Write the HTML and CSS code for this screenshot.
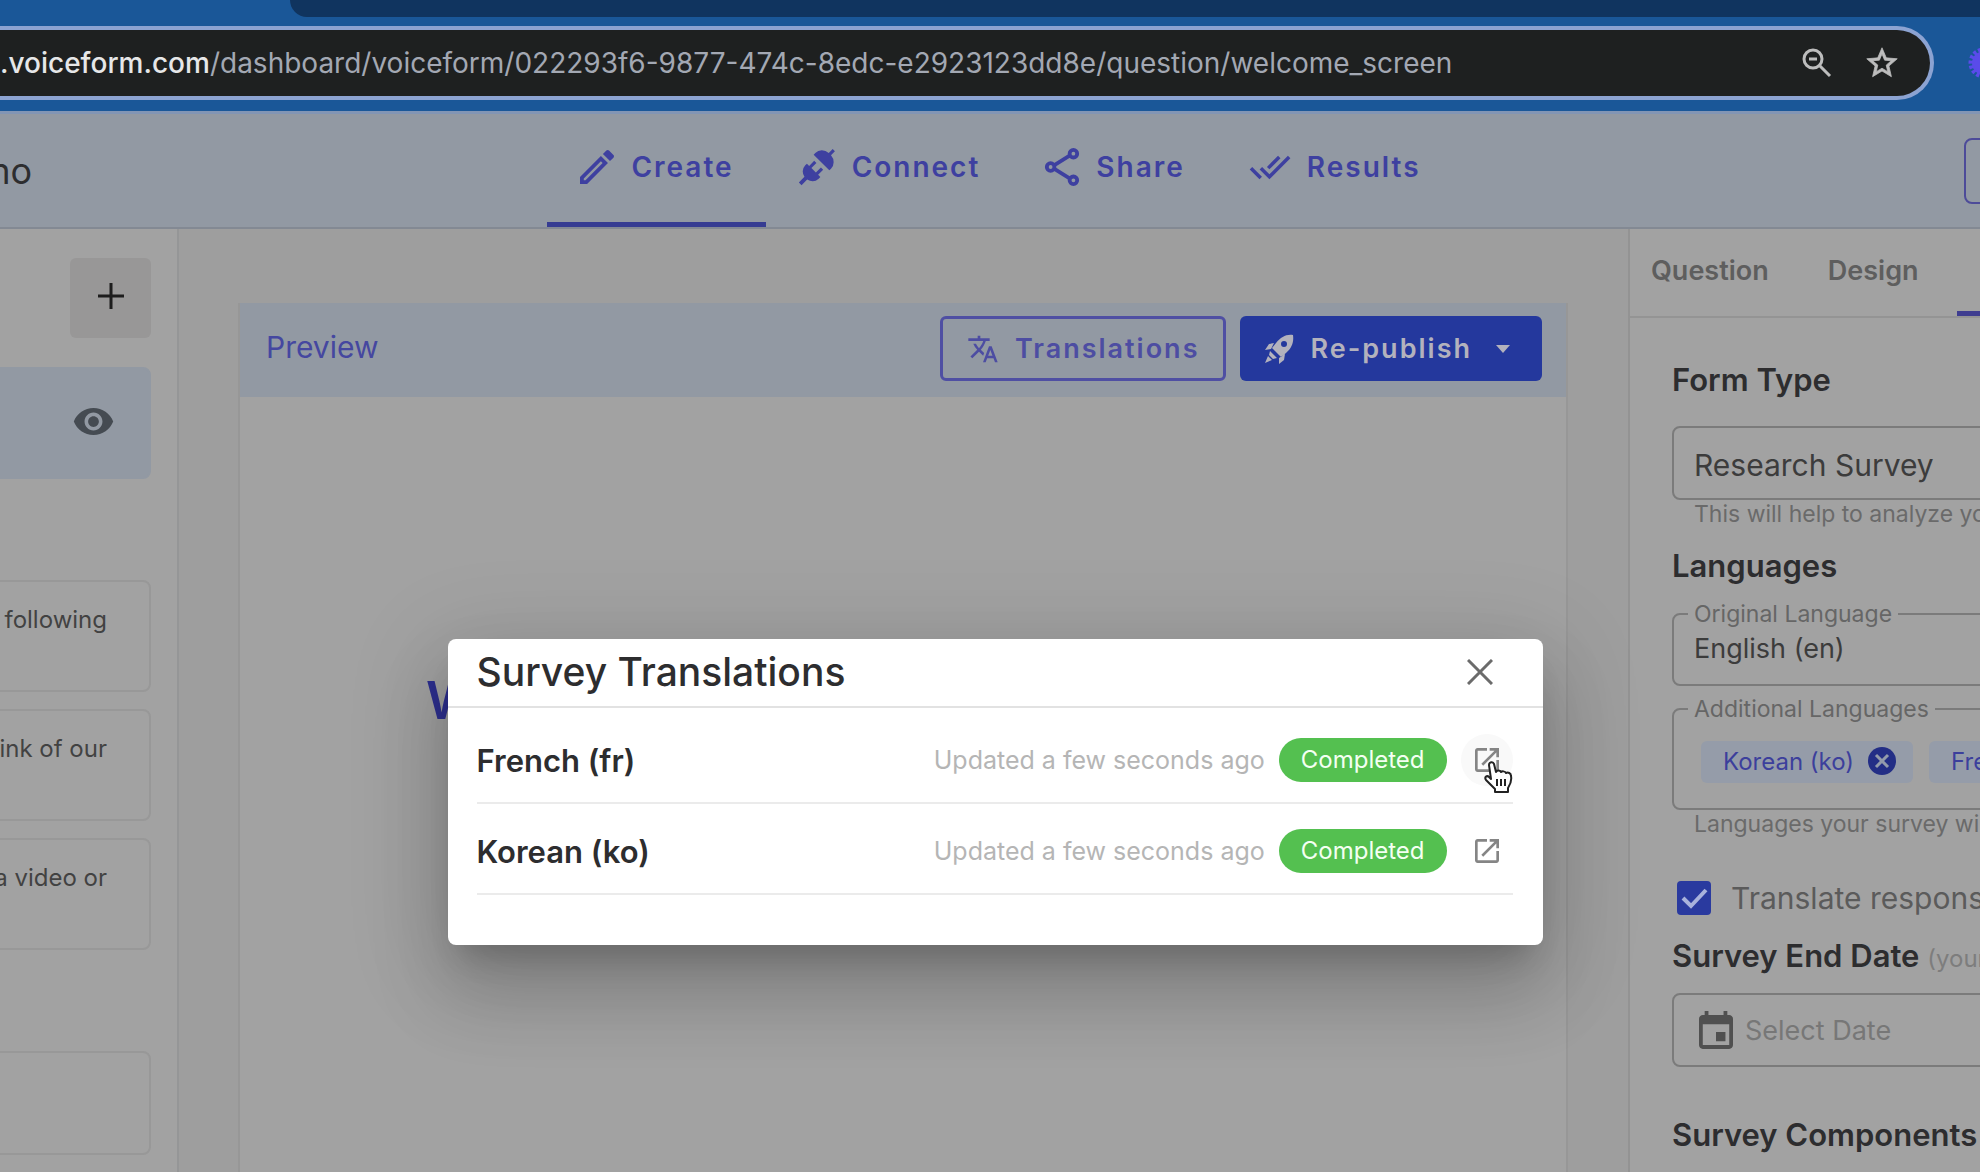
FILE: index.html
```html
<!DOCTYPE html>
<html lang="en">
<head>
    <meta charset="UTF-8" />
    <meta name="viewport" content="width=device-width, initial-scale=1.0" />
    <title>Survey Translations</title>
    <link rel="stylesheet" href="styles.css">
</head>
<body>

    <div class="browser">
        <div class="tab-strip"></div>
        <div class="toolbar">
            <div class="address">
                <span class="url"><b>.voiceform.com</b>/dashboard/voiceform/022293f6-9877-474c-8edc-e2923123dd8e/question/welcome_screen</span>
                <button class="bar-button" aria-label="Zoom">
                    <svg width="30" height="30" viewBox="0 0 30 30" fill="none" stroke="currentColor" stroke-width="3"><circle cx="11" cy="11" r="9" /><path d="M18 18l10 10M7 11h8" /></svg>
                </button>
                <button class="bar-button" aria-label="Bookmark">
                    <svg width="32" height="32" viewBox="1.5 1.5 21 21" fill="currentColor" stroke="currentColor" stroke-width=".5"><path d="M22 9.24l-7.19-.62L12 2 9.19 8.63 2 9.24l5.46 4.73L5.82 21 12 17.27 18.18 21l-1.63-7.03L22 9.24zM12 15.4l-3.76 2.27 1-4.28-3.32-2.88 4.38-.38L12 6.1l1.71 4.04 4.38.38-3.32 2.88 1 4.28L12 15.4z" /></svg>
                </button>
            </div>
            <svg class="extension" width="32" height="32" viewBox="0 0 32 32" fill="none" stroke="#5a4bea"><circle cx="16" cy="16" r="8" stroke-width="8" /><circle cx="16" cy="16" r="13" stroke-width="5" stroke-dasharray="3 2" /></svg>
        </div>
    </div>

    <header class="header">
        <div class="survey-name">Demo</div>
        <nav class="steps">
            <a href="#" class="step active">
                <svg width="36" height="34" viewBox="3 3 18 18" fill="currentColor"><path d="M14.06 9.02l.92.92L5.92 19H5v-.92l9.06-9.06M17.66 3c-.25 0-.51.1-.7.29l-1.83 1.83 3.75 3.75 1.83-1.83c.39-.39.39-1.02 0-1.41l-2.34-2.34c-.2-.2-.45-.29-.71-.29zm-3.6 3.19L3 17.25V21h3.75L17.81 9.94l-3.75-3.75z" /></svg>
                Create
            </a>
            <a href="#" class="step">
                <svg width="38" height="40" viewBox="0 0 24 24" fill="currentColor"><g transform="rotate(45 12 12)"><path d="M5 8V6.500a6.500 6 0 0 1 6-6V-3h2V.5a6.500 6 0 0 1 6 6V8zM6 15H8v-4.500h2V15h4v-4.500h2V15h2v1.500A6.500 6 0 0 1 13.200 22v5h-2.400v-5A6.500 6 0 0 1 6 16.500z" /></g></svg>
                Connect
            </a>
            <a href="#" class="step">
                <svg width="36" height="38" viewBox="3 2 18 20" fill="none" stroke="currentColor" stroke-width="2"><circle cx="18" cy="5" r="2" /><circle cx="6" cy="12" r="2" /><circle cx="18" cy="19" r="2" /><path d="M8 11l8-5M8 13l8 5" /></svg>
                Share
            </a>
            <a href="#" class="step">
                <svg width="42" height="42" viewBox="0 0 24 24" fill="currentColor"><path d="M18 7l-1.410-1.410-6.340 6.340 1.410 1.410L18 7zm4.240-1.410L11.660 16.170 7.480 12l-1.410 1.410L11.660 19l12-12-1.420-1.410zM.41 13.410L6 19l1.410-1.410L1.830 12 .41 13.410z" /></svg>
                Results
            </a>
        </nav>
        <button class="header-button" aria-label="Account"></button>
    </header>

    <main class="layout">
        <aside class="questions">
            <div class="question-list">
                <button class="add" aria-label="Add question">
                    <svg width="26" height="26" viewBox="0 0 26 26" stroke="currentColor" stroke-width="3"><path d="M13 0v26M0 13h26" /></svg>
                </button>
                <div class="question selected">
                    <svg width="43" height="43" viewBox="0 0 24 24" fill="currentColor"><path d="M12 4.500C7 4.500 2.730 7.610 1 12c1.730 4.390 6 7.500 11 7.500s9.270-3.110 11-7.500c-1.730-4.390-6-7.500-11-7.500zM12 17c-2.760 0-5-2.240-5-5s2.240-5 5-5 5 2.240 5 5-2.240 5-5 5zm0-8c-1.660 0-3 1.340-3 3s1.340 3 3 3 3-1.340 3-3-1.340-3-3-3z" /></svg>
                </div>
                <div class="question section-start">following</div>
                <div class="question">think of our</div>
                <div class="question">a video or</div>
                <div class="question section-start short"></div>
            </div>
        </aside>

        <section class="canvas">
            <div class="preview">
                <div class="preview-header">
                    <span class="preview-title">Preview</span>
                    <button class="button outlined">
                        <svg width="32" height="32" viewBox="0 1 24 22" fill="currentColor"><path d="M12.870 15.070l-2.540-2.510.03-.03c1.740-1.940 2.980-4.170 3.710-6.530H17V4h-7V2H8v2H1v1.990h11.170C11.500 7.920 10.440 9.750 9 11.350 8.070 10.320 7.300 9.190 6.690 8h-2c.73 1.630 1.730 3.170 2.980 4.560l-5.090 5.020L4 19l5-5 3.110 3.110.76-2.040zM18.500 10h-2L12 22h2l1.120-3h4.750L21 22h2l-4.500-12zm-2.620 7l1.620-4.330L19.120 17h-3.240z" /></svg>
                        Translations
                    </button>
                    <button class="button filled">
                        <svg width="30" height="30" viewBox="0 0 30 30" fill="currentColor"><path fill-rule="evenodd" d="M29 1c1 7-1 13-7 18l-5 4-9-9 4-5C17 3 22 0 29 1zM20 7a3 3 0 1 0 0 6 3 3 0 0 0 0-6zM10 9l-3 6-6 1 4-6zM15 24l6-4-1 6-5 4zM6 17l7 7-4 1-4-4zM4 22l4 4-7 3z" /></svg>
                        Re-publish
                        <svg class="caret" width="14" height="8" viewBox="0 0 14 8" fill="currentColor"><path d="M0 0h14L7 8z" /></svg>
                    </button>
                </div>
                <h1>Welcome</h1>
            </div>
        </section>

        <aside class="settings">
            <div class="settings-tabs">
                <button class="tab">Question</button>
                <button class="tab">Design</button>
                <button class="tab current" aria-label="Settings"></button>
            </div>
            <form class="settings-form">
                <h2><label for="formType">Form Type</label></h2>
                <select id="formType" class="field">
                    <option>Research Survey</option>
                </select>
                <p class="hint">This will help to analyze your</p>

                <h2 class="languages">Languages</h2>
                <fieldset>
                    <legend><label for="original">Original Language</label></legend>
                    <select id="original" class="plain">
                        <option>English (en)</option>
                    </select>
                </fieldset>
                <fieldset class="additional">
                    <legend>Additional Languages</legend>
                    <div class="chips">
                        <span class="chip">Korean (ko)
                            <button type="button" aria-label="Remove Korean">
                                <svg width="28" height="28" viewBox="0 0 28 28"><circle cx="14" cy="14" r="14" fill="#232e86" /><path d="M8 8l12 12M20 8L8 20" stroke="#939bab" stroke-width="3" /></svg>
                            </button>
                        </span>
                        <span class="chip">French (fr)</span>
                    </div>
                </fieldset>
                <p class="hint">Languages your survey will</p>

                <label class="check"><input type="checkbox" checked>Translate responses</label>

                <h2><label for="endDate">Survey End Date</label> <small>(your survey)</small></h2>
                <div class="field date">
                    <svg width="34" height="38" viewBox="3 1 18 20" fill="currentColor"><path d="M17 12h-5v5h5v-5zM16 1v2H8V1H6v2H5c-1.110 0-1.990.9-1.990 2L3 19c0 1.100.89 2 2 2h14c1.100 0 2-.9 2-2V5c0-1.100-.9-2-2-2h-1V1h-2zm3 18H5V8h14v11z" /></svg>
                    <input type="text" id="endDate" placeholder="Select Date">
                </div>

                <h2 class="components">Survey Components</h2>
            </form>
        </aside>
    </main>

    <div class="overlay">
        <div class="dialog" role="dialog" aria-labelledby="dialogTitle">
            <div class="dialog-header">
                <h2 id="dialogTitle">Survey Translations</h2>
                <button class="close" aria-label="Close">
                    <svg width="26" height="26" viewBox="0 0 26 26" stroke="currentColor" stroke-width="3"><path d="M1 1l24 24M25 1L1 25" /></svg>
                </button>
            </div>
            <ul class="translations">
                <li>
                    <strong>French (fr)</strong>
                    <span class="updated">Updated a few seconds ago</span>
                    <span class="status">Completed</span>
                    <button class="open hovered" aria-label="Open French translation">
                        <svg width="24" height="24" viewBox="3 3 18 18" fill="currentColor"><path d="M19 19H5V5h7V3H5c-1.110 0-2 .9-2 2v14c0 1.100.89 2 2 2h14c1.100 0 2-.9 2-2v-7h-2v7zM14 3v2h3.590l-9.830 9.830 1.410 1.410L19 6.410V10h2V3h-7z" /></svg>
                        <svg class="pointer" width="32" height="34" viewBox="0 0 32 34" fill="#fff" stroke="#222" stroke-width="2" stroke-linejoin="round"><path d="M8 19L6 5c0-3 4-4 5-1l2 8c1-2 4-2 5 0 1-1 4-1 5 1 2-1 5 0 5 3 1 5-1 9-3 12v4H12v-3L3 20c-2-3 1-5 3-3z" /><path d="M14 19v7M18 19v7M22 19v7" /></svg>
                    </button>
                </li>
                <li>
                    <strong>Korean (ko)</strong>
                    <span class="updated">Updated a few seconds ago</span>
                    <span class="status">Completed</span>
                    <button class="open" aria-label="Open Korean translation">
                        <svg width="24" height="24" viewBox="3 3 18 18" fill="currentColor"><path d="M19 19H5V5h7V3H5c-1.110 0-2 .9-2 2v14c0 1.100.89 2 2 2h14c1.100 0 2-.9 2-2v-7h-2v7zM14 3v2h3.590l-9.830 9.830 1.410 1.410L19 6.410V10h2V3h-7z" /></svg>
                    </button>
                </li>
            </ul>
        </div>
    </div>

</body>
</html>
```
FILE: styles.css
```css
* {
    box-sizing: border-box;
}

body {
    margin: 0;
    height: 100vh;
    display: flex;
    flex-direction: column;
    overflow: hidden;
    position: relative;
    font-family: Inter, "Open Sans", sans-serif;
    color: #2d2d2f;
    background-color: #9e9e9e;
}

h1, h2, p, ul {
    margin: 0;
    padding: 0;
}

button {
    font-family: inherit;
    background: none;
    border: none;
    padding: 0;
    color: inherit;
    cursor: pointer;
}

svg {
    display: block;
    flex: none;
}

/* browser bar */
.browser {
    background-color: #1a5798;
    height: 114px;
    flex: none;
    border-bottom: 3px solid #8295b4;
}

.tab-strip {
    height: 17px;
    margin-left: 290px;
    background-color: #10345f;
    border-bottom-left-radius: 18px;
}

.toolbar {
    display: flex;
    align-items: center;
    padding-top: 9px;
    overflow: hidden;
}

.address {
    flex: 1;
    display: flex;
    align-items: center;
    height: 74px;
    padding-right: 32px;
    background-color: #1e2020;
    border: 4px solid #8ca3d2;
    border-left: none;
    border-radius: 0 37px 37px 0;
    color: #a3a8b3;
}

.url {
    flex: 1;
    font-size: 28px;
    white-space: nowrap;
}

    .url b {
        font-weight: 500;
        color: #e6e7e8;
    }

.bar-button {
    margin-left: 34px;
    color: #bdbdbd;
}

.extension {
    margin: 0 -20px 0 34px;
}

/* header */
.header {
    display: grid;
    grid-template-columns: 1fr auto 1fr;
    align-items: center;
    height: 115px;
    flex: none;
    overflow: hidden;
    background-color: #9299a3;
    border-bottom: 2px solid #838993;
}

.survey-name {
    margin-left: -68px;
    font-size: 36px;
}

.steps {
    display: flex;
    align-self: stretch;
    margin-left: 20px;
}

.step {
    display: flex;
    align-items: center;
    gap: 16px;
    padding: 0 32px 2px;
    border-bottom: 5px solid transparent;
    font-size: 28px;
    font-weight: 600;
    letter-spacing: 2px;
    color: #3e40a0;
    text-decoration: none;
}

    .step.active {
        border-bottom-color: #363c92;
    }

.header-button {
    justify-self: end;
    width: 60px;
    height: 66px;
    margin-right: -44px;
    border: 2px solid #4d4b99;
    border-radius: 8px;
}

/* layout */
.layout {
    flex: 1;
    min-height: 0;
    display: grid;
    grid-template-columns: 179px 1fr 352px;
}

.questions {
    display: flex;
    justify-content: flex-end;
    overflow: hidden;
    background-color: #a2a2a2;
    border-right: 2px solid #959697;
    padding: 29px 26px 0 0;
}

.question-list {
    flex: none;
    width: 400px;
    display: flex;
    flex-direction: column;
    gap: 17px;
}

.add {
    align-self: flex-end;
    display: grid;
    place-items: center;
    width: 81px;
    height: 80px;
    margin-bottom: 12px;
    padding-bottom: 4px;
    border-radius: 6px;
    background-color: #989797;
    color: #1d1d1d;
}

.question {
    height: 112px;
    padding: 24px 42px;
    border: 2px solid #989898;
    border-radius: 8px;
    font-size: 24px;
    line-height: 28px;
    text-align: right;
    color: #424242;
}

    .question.selected {
        display: flex;
        justify-content: flex-end;
        align-items: center;
        padding: 0 34px 4px;
        background-color: #9299a3;
        border-color: #9299a3;
        color: #454b52;
    }

    .question.section-start {
        margin-top: 84px;
    }

    .question.short {
        height: 104px;
    }

/* preview */
.canvas {
    display: flex;
    padding: 74px 60px 0 59px;
}

.preview {
    flex: 1;
    min-width: 0;
    background-color: #a2a2a2;
    border: 2px solid #979797;
    border-width: 0 2px;
}

.preview-header {
    display: flex;
    align-items: center;
    gap: 14px;
    height: 94px;
    padding: 0 24px 3px 26px;
    background-color: #9299a3;
}

.preview-title {
    flex: 1;
    font-size: 30px;
    color: #4547a0;
    padding-bottom: 4px;
}

.button {
    display: flex;
    align-items: center;
    height: 65px;
    gap: 16px;
    border-radius: 6px;
    font-size: 27px;
    font-weight: 600;
    letter-spacing: 2px;
    padding: 0 24px;
}

    .button.outlined {
        border: 3px solid #4f4fa3;
        color: #4d4da2;
    }

    .button.filled {
        background-color: #24389d;
        color: #b3b2bd;
    }

.caret {
    margin: 0 8px;
}

.preview h1 {
    padding: 272px 0 0 186px;
    font-size: 52px;
    line-height: 64px;
    font-weight: 600;
    color: #2e3090;
}

/* settings */
.settings {
    overflow: hidden;
    background-color: #a2a2a2;
    border-left: 2px solid #939393;
    white-space: nowrap;
}

.settings-tabs {
    display: flex;
    height: 89px;
    border-bottom: 2px solid #949494;
}

.tab {
    flex: none;
    padding: 0 38px 4px 21px;
    font-size: 27px;
    font-weight: 600;
    color: #5e5e5e;
}

    .tab.current {
        width: 120px;
        border-bottom: 5px solid #3f3d90;
    }

.settings-form {
    width: 440px;
    padding: 44px 0 0 42px;
}

h2 {
    font-size: 31px;
    line-height: 36px;
    font-weight: 600;
}

small {
    font-size: 24px;
    font-weight: 400;
    color: #7d7d7d;
}

.field {
    display: block;
    width: 100%;
    height: 74px;
    margin-top: 28px;
    padding: 4px 20px 0;
    background: none;
    border: 2px solid #7b7b7b;
    border-radius: 8px;
    appearance: none;
    font-family: inherit;
    font-size: 30px;
    color: #3c3c3c;
}

.hint {
    padding-left: 22px;
    font-size: 23px;
    line-height: 28px;
    color: #6a6a6a;
}

.languages {
    margin: 20px 0 16px;
}

fieldset {
    height: 86px;
    margin: 0;
    padding: 5px 20px 0;
    border: 2px solid #7b7b7b;
    border-radius: 8px;
}

    fieldset.additional {
        height: 115px;
        margin-top: 9px;
        padding-top: 18px;
    }

legend {
    margin-left: -6px;
    padding: 0 6px;
    font-size: 23px;
    line-height: 28px;
    color: #666;
}

.plain {
    display: block;
    padding: 0;
    background: none;
    border: none;
    appearance: none;
    font-family: inherit;
    font-size: 27px;
    line-height: 32px;
    color: #3c3c3c;
}

.chips {
    display: flex;
    gap: 16px;
    padding-left: 7px;
}

.chip {
    display: flex;
    align-items: center;
    gap: 14px;
    height: 42px;
    padding: 0 17px 2px 22px;
    border-radius: 6px;
    background-color: #959ca9;
    font-size: 24px;
    color: #3c3f9c;
}

.check {
    display: flex;
    align-items: center;
    gap: 20px;
    height: 36px;
    margin: 42px 0 22px 5px;
    font-size: 30px;
    color: #5b5b5b;
}

    .check input {
        appearance: none;
        width: 34px;
        height: 34px;
        margin: 0;
        border-radius: 4px;
        background: #2a3a9f url("data:image/svg+xml,%3Csvg xmlns='http://www.w3.org/2000/svg' viewBox='0 0 34 34'%3E%3Cpath d='M6 17l8 8L29 9' fill='none' stroke='%23a9b2dc' stroke-width='4'/%3E%3C/svg%3E");
    }

.date {
    display: flex;
    align-items: center;
    gap: 12px;
    margin-top: 16px;
    padding: 0 25px;
    color: #505050;
}

    .date input {
        border: none;
        background: none;
        padding: 0;
        font-family: inherit;
        font-size: 27px;
    }

    .date input::placeholder {
        color: #777;
    }

.components {
    margin-top: 50px;
}

/* dialog */
.overlay {
    position: absolute;
    inset: 0;
    display: flex;
    justify-content: center;
    align-items: flex-start;
    padding: 639px 0 0 10px;
}

.dialog {
    width: 1095px;
    max-width: 90%;
    padding-bottom: 50px;
    border-radius: 8px;
    background-color: #fff;
    box-shadow: 0 22px 30px -14px rgba(0,0,0,0.2), 0 48px 76px 6px rgba(0,0,0,0.14), 0 18px 92px 16px rgba(0,0,0,0.12);
}

.dialog-header {
    display: flex;
    align-items: center;
    justify-content: space-between;
    height: 69px;
    padding: 0 50px 2px 29px;
    border-bottom: 2px solid #e2e2e2;
}

    .dialog-header h2 {
        font-size: 39px;
        font-weight: 500;
    }

.close {
    color: #6b6b6b;
}

.translations {
    list-style: none;
    padding: 5px 30px 0 29px;
}

    .translations li {
        display: flex;
        align-items: center;
        height: 91px;
        padding-top: 5px;
        border-bottom: 2px solid #ebebeb;
    }

    .translations strong {
        flex: 1;
        font-size: 31px;
        font-weight: 600;
    }

.updated {
    font-size: 25px;
    color: #b5b5b5;
}

.status {
    margin: 0 14px;
    padding: 0 22px;
    border-radius: 22px;
    background-color: #54c050;
    font-size: 24px;
    line-height: 44px;
    color: #f3fff2;
}

.open {
    position: relative;
    display: grid;
    place-items: center;
    width: 52px;
    height: 52px;
    border-radius: 50%;
    color: #858585;
}

    .open.hovered {
        background-color: #f9f9f9;
    }

.pointer {
    position: absolute;
    left: 22px;
    top: 26px;
}
```
